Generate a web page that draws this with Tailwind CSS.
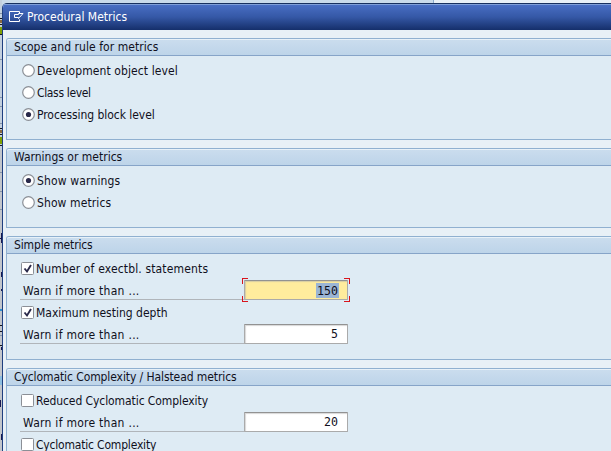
<!DOCTYPE html>
<html lang="en"><head><meta charset="utf-8"><title>Procedural Metrics</title>
<script src="https://cdn.jsdelivr.net/npm/@tailwindcss/browser@4"></script></head>
<body class="w-[611px] h-[451px] overflow-hidden bg-[#c9daea] font-['DejaVu_Sans_Condensed','DejaVu_Sans',sans-serif] text-[12px] text-[#10101c] [font-stretch:condensed]">
<div class="relative w-[611px] h-[451px] overflow-hidden pl-[2px] pt-[3px]">
  <div class="absolute top-0 left-[433px] right-0 h-[3px] bg-[#e8f0f6] border-l border-[#8aaacc]"></div>
  <svg class="absolute left-0 top-0" width="2" height="451" shape-rendering="crispEdges">
    <rect width="2" height="451" fill="#c3d0de"/>
    <rect y="150" width="2" height="301" fill="#c2c6cc"/>
    <path d="M0 13.500h2M0 59.500h2M0 97.500h2M0 106.500h2M0 123.500h2M0 172.500h2M0 191.500h2M0 209.500h2M0 335.500h2" stroke="#8795a8"/>
    <path d="M0 18.500h2M0 24.500h2M0 34.500h2M0 128.500h2M0 134.500h2M0 145.500h2M0 325.500h2M0 331.500h2M0 345.500h2" stroke="#15151c"/>
    <path d="M0 21.500h2M0 131.500h2" stroke="#8a6a40" stroke-width="3"/>
    <path d="M0 30.500h2M0 140.500h2" stroke="#7fa000" stroke-width="7"/>
    <path d="M1 233v10M0 238.500h2M1 272v5M1 289v2M1 347v3M0 400v7M1 434v6" stroke="#181850"/>
    <path d="M0 309.500h2" stroke="#2f8fd0" stroke-width="2"/>
    <path d="M0 380h2" stroke="#8fbfe0" stroke-width="9"/>
  </svg>
  <main class="relative h-[448px] w-[609px] flex flex-col bg-[#e8f0f6] border-l border-[#1f3f80] rounded-tl-[5px] overflow-hidden">
    <header class="h-[27px] shrink-0 flex items-center gap-[3px] pl-[6px] border-t border-[#17305f] bg-linear-to-b from-[#4a70c6] via-[#3558a6] to-[#152f6b] shadow-[inset_0_1px_0_#7f9fd8] text-white">
      <svg width="15" height="12" viewBox="0 0 15 12" fill="none" stroke="#fff"><path d="M10.500 2.500v-2H.5v10h10v-2M5.500 3.500h4v-1l4.500 0l-4.500 5v-1h-4z"/></svg>
      <h1 class="leading-[16px]">Procedural Metrics</h1>
    </header>
    <div class="flex flex-col gap-2 pl-[3px] pt-2">
      <section class="h-[102px] border border-r-0 border-[#90b0d0] rounded-tl-[3px] bg-[#deebf4]">
        <h2 class="h-[17px] pl-[7px] leading-[16px] rounded-tl-[2px] border-b border-[#86a4c8] bg-linear-to-b from-[#cbddee] to-[#bdd4e9] shadow-[inset_0_1px_0_#e8f1f8] tracking-[0.05px]">Scope and rule for metrics</h2>
        <div class="pt-1 pl-[15px]">
          <label class="h-[22px] flex items-center gap-[2px]"><svg class="mb-[2px]" width="13" height="13"><circle cx="6.500" cy="6.500" r="5.800" fill="#fff" stroke="#8b8f96" stroke-width="1.200"/></svg><span class="tracking-[0.1px]">Development object level</span></label>
          <label class="h-[22px] flex items-center gap-[2px]"><svg class="mb-[2px]" width="13" height="13"><circle cx="6.500" cy="6.500" r="5.800" fill="#fff" stroke="#8b8f96" stroke-width="1.200"/></svg><span class="tracking-[-0.35px]">Class level</span></label>
          <label class="h-[22px] flex items-center gap-[2px]"><svg class="mb-[2px]" width="13" height="13"><circle cx="6.500" cy="6.500" r="5.800" fill="#fff" stroke="#8b8f96" stroke-width="1.200"/><circle cx="6.500" cy="6.500" r="2.600" fill="#29294a"/></svg><span class="tracking-[-0.05px]">Processing block level</span></label>
        </div>
      </section>
      <section class="h-[80px] border border-r-0 border-[#90b0d0] rounded-tl-[3px] bg-[#deebf4]">
        <h2 class="h-[17px] pl-[7px] leading-[16px] rounded-tl-[2px] border-b border-[#86a4c8] bg-linear-to-b from-[#cbddee] to-[#bdd4e9] shadow-[inset_0_1px_0_#e8f1f8]">Warnings or metrics</h2>
        <div class="pt-1 pl-[15px]">
          <label class="h-[22px] flex items-center gap-[2px]"><svg class="mb-[2px]" width="13" height="13"><circle cx="6.500" cy="6.500" r="5.800" fill="#fff" stroke="#8b8f96" stroke-width="1.200"/><circle cx="6.500" cy="6.500" r="2.600" fill="#29294a"/></svg><span class="tracking-[0.15px]">Show warnings</span></label>
          <label class="h-[22px] flex items-center gap-[2px]"><svg class="mb-[2px]" width="13" height="13"><circle cx="6.500" cy="6.500" r="5.800" fill="#fff" stroke="#8b8f96" stroke-width="1.200"/></svg><span class="tracking-[0.1px]">Show metrics</span></label>
        </div>
      </section>
      <section class="h-[124px] border border-r-0 border-[#90b0d0] rounded-tl-[3px] bg-[#deebf4]">
        <h2 class="h-[17px] pl-[7px] leading-[16px] rounded-tl-[2px] border-b border-[#86a4c8] bg-linear-to-b from-[#cbddee] to-[#bdd4e9] shadow-[inset_0_1px_0_#e8f1f8] tracking-[-0.15px]">Simple metrics</h2>
        <div class="pt-1 pl-[13px]">
          <label class="h-[22px] flex items-center gap-[2px] pl-[1px]"><svg class="mb-[2px]" width="13" height="13"><rect x=".5" y=".5" width="12" height="12" rx="1" fill="#fff" stroke="#8b8f96"/><path d="M3.500 6.500l2.500 3l4-6.500" fill="none" stroke="#29294a" stroke-width="1.900"/></svg><span class="tracking-[0.15px]">Number of exectbl. statements</span></label>
          <div class="h-[22px] flex items-start"><span class="w-[224px] h-[20px] pl-[3px] leading-[22px] border-b border-[#b0b5ba] tracking-[0.27px]">Warn if more than ...</span>
            <div class="relative w-[104px] h-[20px] flex justify-end items-center pr-[8px] border border-t-[#929292] border-[#aaa] bg-[#ffec9d] shadow-[inset_1px_1px_1px_#aaa7] font-['DejaVu_Sans_Mono',monospace] text-[11.600px] rounded-[1px]"><span class="h-[15px] leading-[16px] px-[1px] bg-[#9ab4d4]">150</span>
              <svg class="absolute -left-[3px] -top-[3px]" width="108" height="24" fill="none" stroke="#d9141c" shape-rendering="crispEdges"><path d="M.5 6V.5H6M102 .5h5.500V6M107.500 18v5.500H102M6 23.500H.5V18"/></svg></div></div>
          <label class="h-[22px] flex items-center gap-[2px] pl-[1px]"><svg class="mb-[2px]" width="13" height="13"><rect x=".5" y=".5" width="12" height="12" rx="1" fill="#fff" stroke="#8b8f96"/><path d="M3.500 6.500l2.500 3l4-6.500" fill="none" stroke="#29294a" stroke-width="1.900"/></svg><span>Maximum nesting depth</span></label>
          <div class="h-[22px] flex items-start"><span class="w-[224px] h-[20px] pl-[3px] leading-[22px] border-b border-[#b0b5ba] tracking-[0.27px]">Warn if more than ...</span>
            <div class="w-[104px] h-[20px] flex justify-end items-center pr-[9px] pt-[2px] border border-t-[#929292] border-[#aaa] bg-white shadow-[inset_1px_1px_1px_#aaa7] font-['DejaVu_Sans_Mono',monospace] text-[11.600px] rounded-[1px]">5</div></div>
        </div>
      </section>
      <section class="h-[124px] border border-r-0 border-[#90b0d0] rounded-tl-[3px] bg-[#deebf4]">
        <h2 class="h-[17px] pl-[7px] leading-[16px] rounded-tl-[2px] border-b border-[#86a4c8] bg-linear-to-b from-[#cbddee] to-[#bdd4e9] shadow-[inset_0_1px_0_#e8f1f8] tracking-[-0.09px]">Cyclomatic Complexity / Halstead metrics</h2>
        <div class="pt-1 pl-[13px]">
          <label class="h-[22px] flex items-center gap-[2px] pl-[1px]"><svg class="mb-[2px]" width="13" height="13"><rect x=".5" y=".5" width="12" height="12" rx="1" fill="#fff" stroke="#8b8f96"/></svg><span class="tracking-[-0.08px]">Reduced Cyclomatic Complexity</span></label>
          <div class="h-[22px] flex items-start"><span class="w-[224px] h-[20px] pl-[3px] leading-[22px] border-b border-[#b0b5ba] tracking-[0.27px]">Warn if more than ...</span>
            <div class="w-[104px] h-[20px] flex justify-end items-center pr-[9px] pt-[2px] border border-t-[#929292] border-[#aaa] bg-white shadow-[inset_1px_1px_1px_#aaa7] font-['DejaVu_Sans_Mono',monospace] text-[11.600px] rounded-[1px]">20</div></div>
          <label class="h-[22px] flex items-center gap-[2px] pl-[1px]"><svg class="mb-[2px]" width="13" height="13"><rect x=".5" y=".5" width="12" height="12" rx="1" fill="#fff" stroke="#8b8f96"/></svg><span class="tracking-[-0.19px]">Cyclomatic Complexity</span></label>
        </div>
      </section>
    </div>
  </main>
</div>
</body></html>
